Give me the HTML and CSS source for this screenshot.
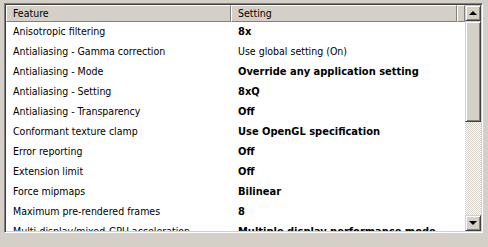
FILE: index.html
```html
<!DOCTYPE html>
<html>
<head>
    <meta charset="UTF-8" />
    <link rel="stylesheet" href="styles.css">
</head>
<body>
    <div class="listbox">
        <div class="view">
            <div class="head">
                <div class="col feature">Feature</div>
                <div class="col setting">Setting</div>
                <div class="col rest"></div>
            </div>
            <div class="rows">
                <div class="row"><span class="feature">Anisotropic filtering</span><span class="setting b">8x</span></div>
                <div class="row"><span class="feature">Antialiasing - Gamma correction</span><span class="setting">Use global setting (On)</span></div>
                <div class="row"><span class="feature">Antialiasing - Mode</span><span class="setting b">Override any application setting</span></div>
                <div class="row"><span class="feature">Antialiasing - Setting</span><span class="setting b">8xQ</span></div>
                <div class="row"><span class="feature">Antialiasing - Transparency</span><span class="setting b">Off</span></div>
                <div class="row"><span class="feature">Conformant texture clamp</span><span class="setting b">Use OpenGL specification</span></div>
                <div class="row"><span class="feature">Error reporting</span><span class="setting b">Off</span></div>
                <div class="row"><span class="feature">Extension limit</span><span class="setting b">Off</span></div>
                <div class="row"><span class="feature">Force mipmaps</span><span class="setting b">Bilinear</span></div>
                <div class="row"><span class="feature">Maximum pre-rendered frames</span><span class="setting b">8</span></div>
                <div class="row"><span class="feature">Multi-display/mixed-GPU acceleration</span><span class="setting b">Multiple display performance mode</span></div>
            </div>
        </div>
        <div class="scrollbar">
            <div class="btn"><span class="up"></span></div>
            <div class="thumb"></div>
            <div class="track"></div>
            <div class="btn"><span class="down"></span></div>
        </div>
    </div>
</body>
</html>
```
FILE: styles.css
```css
body {
    margin: 0;
    background-color: #d4d0c8;
    font-family: Tahoma, "DejaVu Sans", sans-serif;
    font-stretch: condensed;
    font-size: 10.5px;
    color: #000;
}

.listbox {
    margin: 3px 0 0 4px;
    width: 475px;
    height: 226px;
    display: flex;
    background-color: #fff;
    border-top: 1px solid #808080;
    border-left: 1px solid #808080;
    border-right: 1px solid #fff;
    border-bottom: 1px solid #fff;
    box-shadow: inset 1px 1px 0 #404040, inset -1px -1px 0 #d4d0c8;
    padding: 1px;
}

.view {
    flex: 1;
    overflow: hidden;
}

.head {
    display: flex;
    height: 17px;
    background-color: #d4d0c8;
}

.head .col {
    box-sizing: border-box;
    height: 17px;
    line-height: 15px;
    padding-left: 6px;
    border-top: 1px solid #fff;
    border-left: 1px solid #fff;
    border-right: 1px solid #808080;
    border-bottom: 1px solid #808080;
    box-shadow: inset -1px -1px 0 #d4d0c8;
}

.head .feature {
    width: 228px;
    box-shadow: 1px 0 0 #404040;
}

.head .setting {
    width: 229px;
}

.head .rest {
    flex: 1;
}

.row {
    display: flex;
    height: 20px;
    line-height: 19px;
    white-space: nowrap;
}

.row .feature {
    width: 223px;
    padding-left: 7px;
    overflow: hidden;
}

.row .setting {
    padding-left: 2px;
}

.b {
    font-weight: bold;
    font-size: 11px;
}

.scrollbar {
    width: 16px;
    display: flex;
    flex-direction: column;
}

.btn {
    box-sizing: border-box;
    height: 16px;
    background-color: #d4d0c8;
    border-top: 1px solid #d4d0c8;
    border-left: 1px solid #d4d0c8;
    border-right: 1px solid #404040;
    border-bottom: 1px solid #404040;
    box-shadow: inset 1px 1px 0 #fff, inset -1px -1px 0 #808080;
    display: flex;
    align-items: center;
    justify-content: center;
}

.up {
    width: 0;
    height: 0;
    border-left: 4px solid transparent;
    border-right: 4px solid transparent;
    border-bottom: 4px solid #000;
}

.down {
    width: 0;
    height: 0;
    border-left: 4px solid transparent;
    border-right: 4px solid transparent;
    border-top: 4px solid #000;
}

.thumb {
    box-sizing: border-box;
    height: 101px;
    background-color: #d4d0c8;
    border-top: 1px solid #d4d0c8;
    border-left: 1px solid #d4d0c8;
    border-right: 1px solid #404040;
    border-bottom: 1px solid #404040;
    box-shadow: inset 1px 1px 0 #fff, inset -1px -1px 0 #808080;
}

.track {
    flex: 1;
    background-color: #eae8e3;
    background-image: repeating-conic-gradient(#d4d0c8 0 25%, #fff 0 50%);
    background-size: 2px 2px;
}
```
